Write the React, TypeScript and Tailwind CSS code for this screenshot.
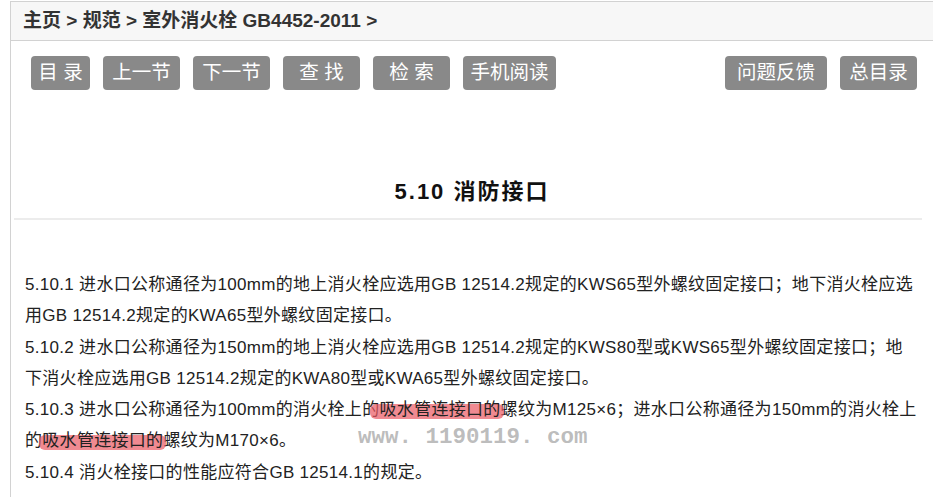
const FONT = '"Liberation Sans", "Noto Sans CJK SC", Arial, sans-serif';

const NAV_LEFT = [
  { label: "目 录", w: "w-[59px]" },
  { label: "上一节", w: "w-[77px]" },
  { label: "下一节", w: "w-[77px]" },
  { label: "查 找", w: "w-[77px]" },
  { label: "检 索", w: "w-[77px]" },
  { label: "手机阅读", w: "w-[93px]" },
];

const NAV_RIGHT = [
  { label: "问题反馈", w: "w-[102px]" },
  { label: "总目录", w: "w-[77px]" },
];

function NavButton({ label, w }: { label: string; w: string }) {
  return (
    <button
      type="button"
      className={`${w} h-[34px] rounded-[4px] bg-[#898989] text-[19.5px] text-white flex items-center justify-center whitespace-pre`}
    >
      {label}
    </button>
  );
}

// pink marker stroke under the lower half of the words
function Marked({ children, lead = "left-[-3px]" }: { children: React.ReactNode; lead?: string }) {
  return (
    <span className="relative inline-block">
      <span className={`absolute ${lead} right-[-3px] top-[10px] h-[15px] rounded-[6px] bg-[rgba(234,88,98,0.7)]`} />
      <span className="relative">{children}</span>
    </span>
  );
}

export default function App() {
  return (
    <div className="min-h-screen bg-white" style={{ fontFamily: FONT }}>
      <div className="relative ml-[10px] min-h-[497px] border-l border-[#d2d2d2]">
        {/* Breadcrumb */}
        <div className="mt-[1px] flex h-[40px] items-center border-y border-[#d2d2d2] bg-[#f7f7f7] px-[12px] text-[19px] font-bold text-[#333]">
          主页 &gt; 规范 &gt; 室外消火栓 GB4452-2011 &gt;
        </div>

        {/* Nav buttons */}
        <div className="mt-[15px] flex items-center justify-between pl-[20px] pr-[16px]">
          <div className="flex gap-[13px]">
            {NAV_LEFT.map((b) => (
              <NavButton key={b.label} {...b} />
            ))}
          </div>
          <div className="flex gap-[13px]">
            {NAV_RIGHT.map((b) => (
              <NavButton key={b.label} {...b} />
            ))}
          </div>
        </div>

        {/* Title */}
        <h1 className="mt-[86px] text-center text-[22px] font-bold tracking-[2px] text-[#111] leading-[32px]">
          5.10 消防接口
        </h1>
        <div className="ml-[3px] mr-[11px] mt-[10px] h-[2px] bg-[#ececec]" />

        {/* Clauses */}
        <div className="mt-[49px] pl-[14px] text-[17px] leading-[31.3px] tracking-[0.3px] text-[#222] whitespace-nowrap">
          <p>5.10.1 进水口公称通径为100mm的地上消火栓应选用GB 12514.2规定的KWS65型外螺纹固定接口；地下消火栓应选</p>
          <p>用GB 12514.2规定的KWA65型外螺纹固定接口。</p>
          <p>5.10.2 进水口公称通径为150mm的地上消火栓应选用GB 12514.2规定的KWS80型或KWS65型外螺纹固定接口；地</p>
          <p>下消火栓应选用GB 12514.2规定的KWA80型或KWA65型外螺纹固定接口。</p>
          <p>
            5.10.3 进水口公称通径为100mm的消火栓上的<Marked lead="left-[-9px]">吸水管连接口的</Marked>螺纹为M125×6；进水口公称通径为150mm的消火栓上
          </p>
          <p>
            的<Marked>吸水管连接口的</Marked>螺纹为M170×6。
          </p>
          <p>5.10.4 消火栓接口的性能应符合GB 12514.1的规定。</p>
        </div>

        {/* Watermark */}
        <div
          className="pointer-events-none absolute left-[347px] top-[425px] text-[22.5px] font-bold leading-none text-[rgba(160,160,160,0.7)]"
          style={{ fontFamily: '"Liberation Mono", monospace' }}
        >
          www. 1190119. com
        </div>
      </div>
    </div>
  );
}
